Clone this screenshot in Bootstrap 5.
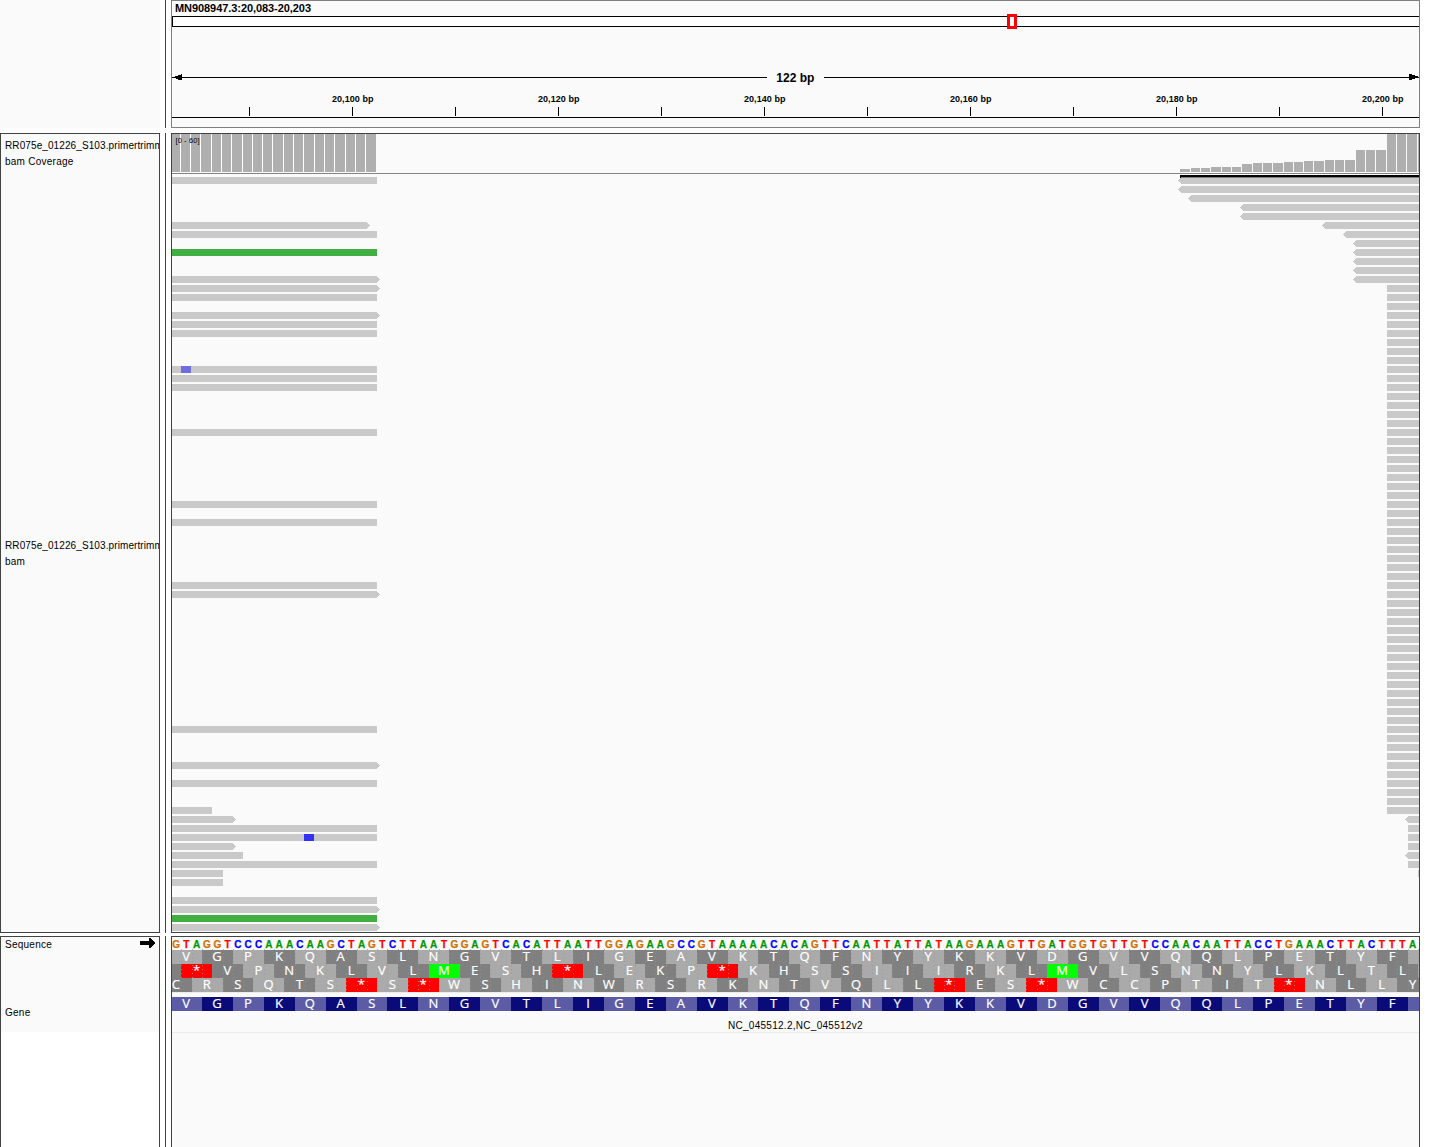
<!DOCTYPE html>
<html lang="en">
<head>
<meta charset="utf-8">
<meta name="viewport" content="width=device-width, initial-scale=1">
<title>MN908947.3:20,083-20,203</title>
<link href="https://cdn.jsdelivr.net/npm/bootstrap@5.3.0/dist/css/bootstrap.min.css" rel="stylesheet">
<style>
body{background:#fff;color:#000;font-family:"Liberation Sans",Arial,sans-serif;height:1147px;overflow:hidden}
.viewer{gap:5px;height:1147px}
.viewer-ruler{height:128px}
.viewer-reads{height:800px}
.viewer-reads,.viewer-genes{--edge:#424242}
.viewer-reads{margin-bottom:-2px}
.viewer-genes{height:220px}
.names{width:160px;background:#fafafa;font-size:10px;line-height:16px;letter-spacing:.25px;white-space:nowrap}
.names.framed{border:1px solid var(--edge);padding-left:4px}
.file-name{letter-spacing:.1px}
.splitter{width:1px;margin:0 5px;background:#424242}
.panel{width:1249px;background:#fafafa;border:1px solid #808080}
.panel.framed{border-color:var(--edge)}
.panel svg{display:block;width:1247px;height:100%}
.cov-name{height:395px;padding-top:4px}
.reads-name{padding-top:9px}
.seq-name{height:68px}
.gene-name{height:27px}
.names-rest{background:#fff;margin-left:-4px}
text{font-family:"Liberation Sans",Arial,sans-serif}
.mid{text-anchor:middle}
.bases text{font-size:10px;font-weight:700;text-anchor:middle;stroke-width:.25px}
.amino text{font-family:"Open Sans","Noto Sans",sans-serif;font-size:13px;fill:#fff;stroke:#fff;stroke-width:.2px;text-anchor:middle}
</style>
<script src="https://cdn.jsdelivr.net/npm/bootstrap@5.3.0/dist/js/bootstrap.bundle.min.js"></script>
</head>
<body>
<main class="viewer d-flex flex-column">
  <section class="viewer-ruler d-flex flex-shrink-0">
    <div class="names flex-shrink-0"></div>
    <div class="splitter flex-shrink-0"></div>
    <div class="panel flex-shrink-0"><svg id="ruler" viewBox="172 1 1247 126" shape-rendering="crispEdges"></svg></div>
  </section>
  <section class="viewer-reads d-flex flex-shrink-0">
    <div class="names framed flex-shrink-0 overflow-hidden">
      <div class="cov-name"><span class="file-name">RR075e_01226_S103.primertrimmed.</span><br>bam Coverage</div>
      <div class="reads-name"><span class="file-name">RR075e_01226_S103.primertrimmed.</span><br>bam</div>
    </div>
    <div class="splitter flex-shrink-0"></div>
    <div class="panel framed flex-shrink-0"><svg id="reads" viewBox="172 134 1247 798" shape-rendering="crispEdges"></svg></div>
  </section>
  <section class="viewer-genes d-flex flex-shrink-0">
    <div class="names framed flex-shrink-0 d-flex flex-column">
      <div class="seq-name d-flex justify-content-between pe-1"><span>Sequence</span>
        <svg width="15" height="15" viewBox="0 0 15 15"><path d="M0 4h9V1h2v1h1v1h1v1h1v1h1v2h-1v1h-1v1h-1v1h-1v1H9V8H0z"/></svg></div>
      <div class="gene-name">Gene</div>
      <div class="names-rest flex-grow-1"></div>
    </div>
    <div class="splitter flex-shrink-0"></div>
    <div class="panel framed flex-shrink-0"><svg id="genes" viewBox="172 937 1247 218" shape-rendering="crispEdges"></svg></div>
  </section>
</main>
<script>
const rect=(x,y,w,h,f)=>`<rect x="${x}" y="${y}" width="${w}" height="${h}" fill="${f}"/>`;

// Genome ruler
let r='<text x="175" y="12" font-size="11" font-weight="700" textLength="136">MN908947.3:20,083-20,203</text>';
r+=rect(172,16,1247,11,'#000')+rect(173,17,1246,9,'#fff')+rect(1007,14,10,15,'#f00')+rect(1010,17,4,9,'#fff');
r+=rect(172,77,595,1,'#000')+rect(824,77,595,1,'#000');
r+='<path d="M175 76h3v-1h3v-1h1v6h-4v-1h-2v-1h-1zM1418 76h-3v-1h-3v-1h-3v6h3v-1h3v-1h3z"/>';
r+='<text class="mid" x="795.3" y="82" font-size="12" font-weight="700">122 bp</text>';
for(let i=0;i<12;i++){
  const x=249+103*i;
  r+=rect(x,107,1,9,'#000');
  if(i%2) r+=`<text class="mid" x="${x+.7}" y="102" font-size="9" font-weight="700" textLength="41.5">20,${100+(i-1)*10} bp</text>`;
}
r+=rect(172,117,1247,1,'#000');
document.getElementById('ruler').innerHTML=r;

// Coverage histogram
const grey='#afafaf',read='#c9c9c9',green='#40ae40';
let a='',start=172;
for(let k=1;k<=20;k++){
  const sep=k===20?376:Math.floor(169.99+10.3*k);
  a+=rect(start,134,sep-start,38,grey);
  if(k<20) a+=rect(sep,134,1,38,'#fff');
  start=sep+1;
}
const xs=[1180,1191,1201,1211,1222,1232,1242,1253,1263,1273,1284,1294,1304,1314,1325,1335,1345,1356,1366,1376,1387,1397,1407,1418,1429];
const hs=[3,4,4,5,5,5,8,9,9,9,10,10,11,11,12,12,12,22,22,22,38,38,38,38];
hs.forEach((h,i)=>{
  a+=rect(xs[i],172-h,xs[i+1]-xs[i]-1,h,grey);
});
a+='<text x="175.5" y="143" font-size="7.5" textLength="24">[0 - 60]</text>';
a+=rect(172,173,1247,1,'#858585');

// Aligned reads: [row, end x, pointed, colour]
const left=[[0,377],[5,367,1],[6,377],[8,377,0,green],[11,377,1],[12,377,1],[13,377],[15,377,1],[16,377],[17,377],[21,377],[22,377],[23,377],[28,377],[36,377],[38,377],[45,377],[46,377,1],[61,377],[65,377,1],[67,377],[70,212],[71,233,1],[72,377],[73,377],[74,233,1],[75,243],[76,377],[77,223],[78,223],[80,377],[81,377,1],[82,377,0,green],[83,377,1]];
for(const [n,x,p,c] of left){
  const y=177+9*n;
  a+=p?`<path fill="${read}" d="M172 ${y}H${x}l3 3.5l-3 3.5H172z"/>`:rect(172,y,x-172,7,c||read);
}
const right=[[0,1181,1],[1,1181,1],[2,1191,1],[3,1243,1],[4,1243,1],[5,1325,1],[6,1346,1]];
for(let n=7;n<12;n++) right.push([n,1356,1]);
for(let n=12;n<71;n++) right.push([n,1387]);
right.push([71,1408,1],[72,1408],[73,1408],[74,1408],[75,1408,1],[76,1408],[77,1418]);
for(const [n,x,p] of right){
  const y=177+9*n;
  a+=p?`<path fill="${read}" d="M1419 ${y}H${x}l-3 3.5l3 3.5H1419z"/>`:rect(x,y,1419-x,7,read);
}
a+=rect(1180,175,239,2,'#000')+rect(1181,177,238,1,'#808080')+rect(1180,177,1,1,'#000');
a+=rect(181,366,10,7,'#6e6ee0')+rect(304,834,10,7,'#3232f5');
document.getElementById('reads').innerHTML=a;

// Sequence, three-frame translation and gene
const bp=10.306,origin=171;
const seq='GTAGGTCCCAAACAAGCTAGTCTTAATGGAGTCACATTAATTGGAGAAGCCGTAAAAACACAGTTCAATTATTATAAGAAAGTTGATGGTGTTGTCCAACAATTACCTGAAACTTACTTTA';
const hue={G:'#d17105',T:'#f00',A:'#009600',C:'#00f'};
const light='#aaaaaa',dark='#808080';
const frame1='VGPKQASLNGVTLIGEAVKTQFNYYKKVDGVVQQLPETYF ';
let g='<g class="bases">';
[...seq].forEach((b,i)=>g+=`<text x="${(176.1+10.305*i).toFixed(1)}" y="948" fill="${hue[b]}" stroke="${hue[b]}">${b}</text>`);
g+='</g><g class="amino">';
function codons(str,first,y,odd,even,gene){
  let cells='',letters='';
  [...str].forEach((c,k)=>{
    const s=first+3*k,x=Math.round(origin+bp*s),e=Math.round(origin+bp*(s+3));
    cells+=rect(x,y,e-x,14,c==='*'?'#f00':c==='M'&&!gene?'#0f0':k%2?odd:even);
    if(c!==' ') letters+=`<text x="${(origin+bp*(s+1.5)-.3).toFixed(1)}" y="${y+11}">${c}</text>`;
  });
  return [cells,letters];
}
const rows=[
  codons(frame1,0,950,dark,light),
  codons(' *VPNKLVLMESH*LEKP*KHSSIIIRKLMVLSNNYLKLTL ',-2,964,light,dark),
  codons('CRSQTS*S*WSHINWRSRKNTVQLL*ES*WCCPTIT*NLLY',-1,978,light,dark)
];
g+=rows.map(v=>v[0]).join('');
for(let i=1;i<=121;i++){
  const x=Math.round(origin+bp*i)+.5;
  g+=`<path d="M${x} 949V992" stroke="#969696" stroke-opacity=".7" stroke-dasharray="1 3"/>`;
}
g+=rows.map(v=>v[1]).join('');
g+=rect(172,992,1247,1,'#ececec');
g+=codons(frame1,0,997,'#0a0a78','#5c5ca6',true).join('')+'</g>';
g+='<text x="728" y="1029" font-size="10" textLength="134.5">NC_045512.2,NC_045512v2</text>';
g+=rect(172,1032,1247,1,'#ececec');
document.getElementById('genes').innerHTML=g;
</script>
</body>
</html>
